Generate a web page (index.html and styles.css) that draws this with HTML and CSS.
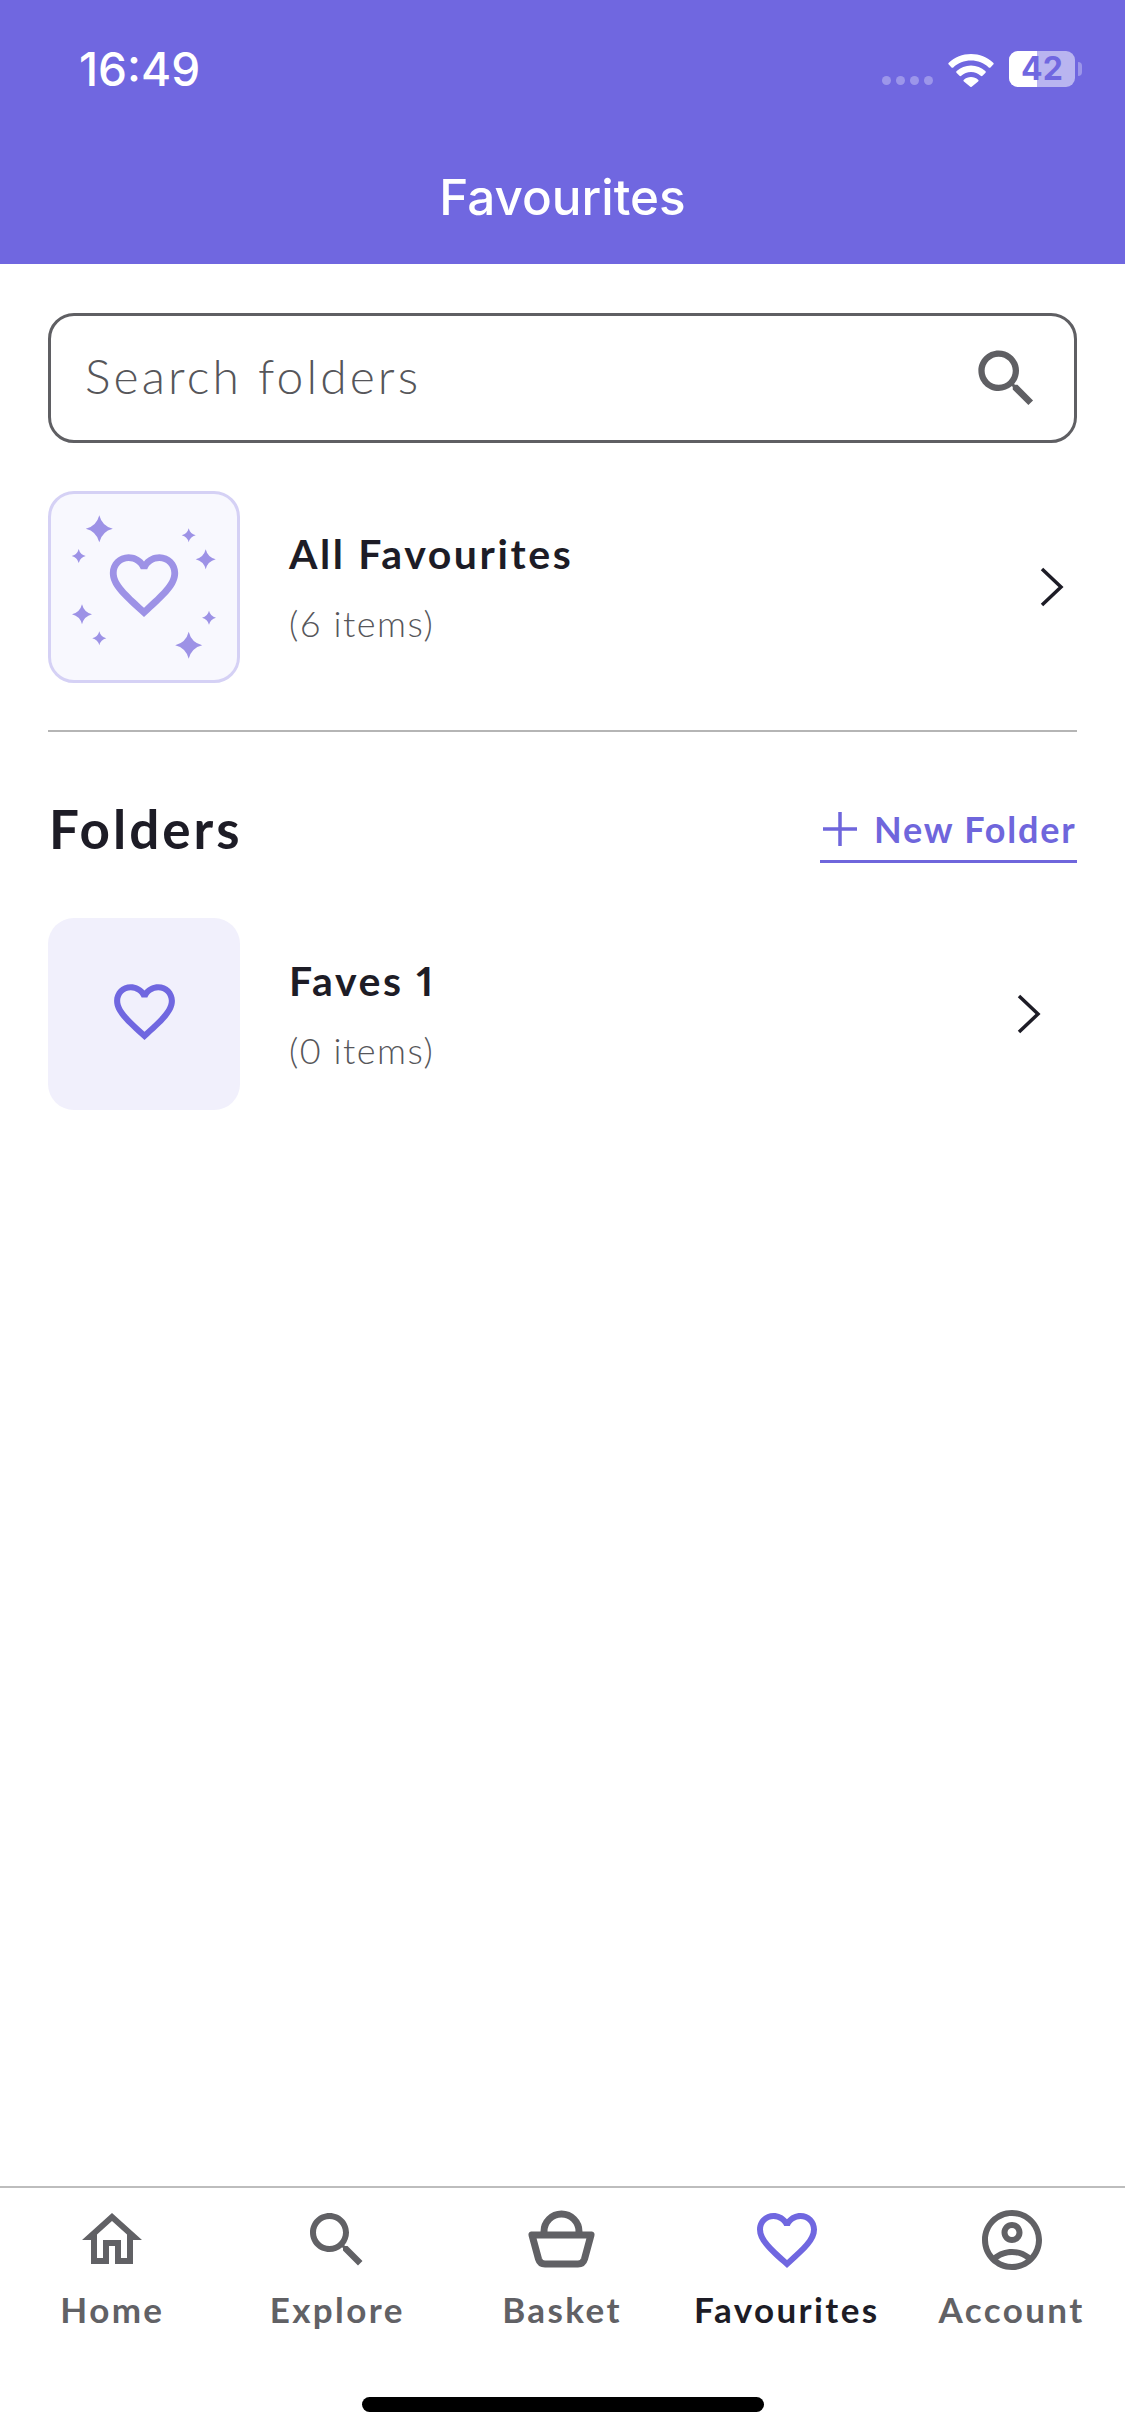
FILE: index.html
```html
<!DOCTYPE html>
<html lang="en">
<head>
<meta charset="utf-8">
<title>Favourites</title>
<link rel="stylesheet" href="styles.css">
</head>
<body>
<div class="app">
  <header class="header">
    <div class="status">
      <span class="time">16:49</span>
      <div class="status-right">
        <div class="dots"><i></i><i></i><i></i><i></i></div>
        <svg class="wifi" viewBox="0 0 46 33"><path d="M23 0C14.500 0 6.700 3.300.8 8.700a1.300 1.300 0 0 0 0 1.900l2.700 2.800a1.300 1.300 0 0 0 1.800 0C10 9.100 16.200 6.500 23 6.500s13 2.600 17.700 6.900a1.300 1.300 0 0 0 1.800 0l2.700-2.800a1.300 1.300 0 0 0 0-1.900C39.300 3.300 31.500 0 23 0zM23 11.500c-5.500 0-10.500 2.100-14.300 5.500a1.300 1.300 0 0 0 0 1.900l2.800 2.800a1.300 1.300 0 0 0 1.800 0c2.500-2.300 6-3.700 9.700-3.700s7.200 1.400 9.700 3.700a1.300 1.300 0 0 0 1.800 0l2.800-2.800a1.300 1.300 0 0 0 0-1.900C33.500 13.600 28.500 11.500 23 11.500zM23 23c-2.700 0-5.200 1-7.100 2.700a1.200 1.200 0 0 0 0 1.800l6.100 5.100a1.500 1.500 0 0 0 2 0l6.100-5.100a1.200 1.200 0 0 0 0-1.800C28.200 24 25.700 23 23 23z"/></svg>
        <div class="battery">
          <div class="battery-body"><div class="battery-fill"></div><span class="battery-num">42</span></div>
          <div class="battery-nub"></div>
        </div>
      </div>
    </div>
    <h1 class="title">Favourites</h1>
  </header>

  <main class="main">
    <div class="search">
      <span class="search-text">Search folders</span>
      <svg class="search-icon" viewBox="0 0 24 24"><path d="M15.500 14h-.79l-.28-.27C15.410 12.590 16 11.110 16 9.500 16 5.910 13.090 3 9.500 3S3 5.910 3 9.500 5.910 16 9.500 16c1.610 0 3.090-.59 4.230-1.570l.27.28v.79l5 4.990L20.490 19l-4.990-5zm-6 0C7.010 14 5 11.990 5 9.500S7.010 5 9.500 5 14 7.010 14 9.500 11.990 14 9.500 14z"/></svg>
    </div>

    <div class="row row-all">
      <div class="tile tile-all">
        <svg class="tile-art" viewBox="0 0 186 186">
          <defs><path id="spark" d="M0-1Q.2-.2 1 0 .2.200 0 1-.2.200-1 0-.2-.2 0-1Z"/></defs>
          <g class="sparks">
            <use href="#spark" transform="translate(48.300 34.700) scale(13.500)"/>
            <use href="#spark" transform="translate(137.700 41.300) scale(7)"/>
            <use href="#spark" transform="translate(27.700 62) scale(7)"/>
            <use href="#spark" transform="translate(154.700 65.300) scale(10)"/>
            <use href="#spark" transform="translate(31 120.300) scale(10)"/>
            <use href="#spark" transform="translate(158 123.700) scale(7)"/>
            <use href="#spark" transform="translate(48.300 144.300) scale(7)"/>
            <use href="#spark" transform="translate(137.700 151.300) scale(13.500)"/>
          </g>
          <path class="spark-heart" transform="translate(52 50) scale(3.417)" d="M16.500 3c-1.740 0-3.410.81-4.500 2.090C10.910 3.810 9.240 3 7.500 3 4.420 3 2 5.420 2 8.500c0 3.780 3.400 6.860 8.550 11.540L12 21.350l1.450-1.320C18.600 15.360 22 12.280 22 8.500 22 5.420 19.580 3 16.500 3zm-4.400 15.550l-.1.100-.1-.1C7.140 14.240 4 11.390 4 8.500 4 6.500 5.500 5 7.500 5c1.540 0 3.040.99 3.570 2.360h1.870C13.460 5.990 14.960 5 16.500 5c2 0 3.500 1.500 3.500 3.500 0 2.890-3.140 5.740-7.900 10.050z"/>
        </svg>
      </div>
      <div class="row-text">
        <div class="row-title">All Favourites</div>
        <div class="row-sub">(6 items)</div>
      </div>
      <svg class="chev chev-all" viewBox="0 0 24 40"><path d="M2 2l19 18L2 38"/></svg>
    </div>

    <div class="divider"></div>

    <div class="folders-head">
      <h2 class="folders-title">Folders</h2>
      <div class="new-folder">
        <svg class="plus" viewBox="0 0 34 34"><path d="M17 0v34M0 17h34"/></svg>
        <span>New Folder</span>
      </div>
    </div>

    <div class="row row-folder">
      <div class="tile tile-folder">
        <svg class="heart-icon" viewBox="0 0 24 24"><path d="M16.500 3c-1.740 0-3.410.81-4.500 2.090C10.910 3.810 9.240 3 7.500 3 4.420 3 2 5.420 2 8.500c0 3.780 3.400 6.860 8.550 11.540L12 21.350l1.450-1.320C18.600 15.360 22 12.280 22 8.500 22 5.420 19.580 3 16.500 3zm-4.400 15.550l-.1.100-.1-.1C7.140 14.240 4 11.390 4 8.500 4 6.500 5.500 5 7.500 5c1.540 0 3.040.99 3.570 2.360h1.870C13.460 5.990 14.960 5 16.500 5c2 0 3.500 1.500 3.500 3.500 0 2.890-3.140 5.740-7.900 10.050z"/></svg>
      </div>
      <div class="row-text">
        <div class="row-title row-title-num">Faves 1</div>
        <div class="row-sub">(0 items)</div>
      </div>
      <svg class="chev chev-folder" viewBox="0 0 24 40"><path d="M2 2l19 18L2 38"/></svg>
    </div>
  </main>

  <nav class="tabbar">
    <div class="tabs">
      <div class="tab">
        <svg class="tab-icon" viewBox="0 0 24 24"><path d="M12 5.690l5 4.500V18h-2v-6H9v6H7v-7.810l5-4.500M12 3L2 12h3v8h6v-6h2v6h6v-8h3L12 3z"/></svg>
        <span class="tab-label">Home</span>
      </div>
      <div class="tab">
        <svg class="tab-icon" viewBox="0 0 24 24"><path d="M15.500 14h-.79l-.28-.27C15.410 12.590 16 11.110 16 9.500 16 5.910 13.090 3 9.500 3S3 5.910 3 9.500 5.910 16 9.500 16c1.610 0 3.090-.59 4.230-1.570l.27.28v.79l5 4.990L20.490 19l-4.990-5zm-6 0C7.010 14 5 11.990 5 9.500S7.010 5 9.500 5 14 7.010 14 9.500 11.990 14 9.500 14z"/></svg>
        <span class="tab-label">Explore</span>
      </div>
      <div class="tab">
        <svg class="tab-icon basket" viewBox="0 0 72 72"><path d="M6 31H65M18 31V27.500A17.500 17.500 0 0 1 53 27.500V31M6 31L12.500 55Q14 60 19 60H52Q57 60 58.500 55L65 31"/></svg>
        <span class="tab-label">Basket</span>
      </div>
      <div class="tab tab-active">
        <svg class="tab-icon" viewBox="0 0 24 24"><path d="M16.500 3c-1.740 0-3.410.81-4.500 2.090C10.910 3.810 9.240 3 7.500 3 4.420 3 2 5.420 2 8.500c0 3.780 3.400 6.860 8.550 11.540L12 21.350l1.450-1.320C18.600 15.360 22 12.280 22 8.500 22 5.420 19.580 3 16.500 3zm-4.400 15.550l-.1.100-.1-.1C7.140 14.240 4 11.390 4 8.500 4 6.500 5.500 5 7.500 5c1.540 0 3.040.99 3.570 2.360h1.870C13.460 5.990 14.960 5 16.500 5c2 0 3.500 1.500 3.500 3.500 0 2.890-3.140 5.740-7.900 10.050z"/></svg>
        <span class="tab-label">Favourites</span>
      </div>
      <div class="tab">
        <svg class="tab-icon" viewBox="0 0 24 24"><path d="M12 2C6.480 2 2 6.480 2 12s4.480 10 10 10 10-4.480 10-10S17.520 2 12 2zM7.350 18.500C8.660 17.560 10.260 17 12 17s3.340.56 4.650 1.500C15.340 19.440 13.740 20 12 20s-3.340-.56-4.650-1.500zm10.790-1.380C16.450 15.800 14.320 15 12 15s-4.450.8-6.140 2.120C4.700 15.730 4 13.950 4 12c0-4.420 3.580-8 8-8s8 3.580 8 8c0 1.950-.7 3.730-1.860 5.120z"/><path d="M12 6c-1.930 0-3.500 1.570-3.500 3.500S10.070 13 12 13s3.500-1.570 3.500-3.500S13.930 6 12 6zm0 5c-.83 0-1.500-.67-1.500-1.500S11.170 8 12 8s1.500.67 1.500 1.500S12.830 11 12 11z"/></svg>
        <span class="tab-label">Account</span>
      </div>
    </div>
    <div class="home-bar"></div>
  </nav>
</div>
</body>
</html>
```

FILE: styles.css
```css
* { box-sizing: border-box; }
html, body { margin: 0; padding: 0; background: #fff; }
body { font-family: "Lato", "Open Sans", sans-serif; color: #1d1c26; }
.app { width: 1125px; height: 2436px; display: flex; flex-direction: column; overflow: hidden; }

.header { background: #7067e0; height: 264px; color: #fff; padding-top: 44px; display: flex; flex-direction: column; }
.status { height: 50px; display: flex; justify-content: space-between; align-items: center; padding: 0 43px 0 79px; }
.time { font-family: "Inter", sans-serif; font-weight: 500; font-size: 46px; line-height: 50px; }
.status-right { display: flex; align-items: center; }
.dots { display: flex; gap: 5px; margin-top: 22px; margin-right: 15px; }
.dots i { width: 9px; height: 9px; border-radius: 50%; background: #9c96ea; display: block; }
.wifi { width: 46px; height: 33px; fill: #fff; margin-right: 15px; margin-top: 2px; }
.battery { display: flex; align-items: center; }
.battery-body { width: 66px; height: 36px; border-radius: 9px; background: #b9b5f0; display: grid; place-items: center; }
.battery-fill { grid-area: 1 / 1; justify-self: start; width: 28px; height: 36px; border-radius: 9px 0 0 9px; background: #fff; }
.battery-num { grid-area: 1 / 1; font-family: "Inter", sans-serif; font-weight: 700; font-size: 32px; line-height: 36px; color: #7067e0; }
.battery-nub { width: 4px; height: 14px; margin-left: 3px; border-radius: 0 4px 4px 0; background: #9c96ea; }
.title { margin: 73px 0 0; font-family: "Inter", sans-serif; font-weight: 500; font-size: 49.400px; line-height: 60px; text-align: center; }

.main { flex: 1; padding: 49px 48px 0; display: flex; flex-direction: column; }
.search { height: 130px; border: 3px solid #5f5f63; border-radius: 26px; display: flex; align-items: center; justify-content: space-between; padding: 0 30px 0 34px; }
.search-text { font-weight: 300; font-size: 48px; letter-spacing: 3.100px; color: #56565a; margin-bottom: 5px; }
.search-icon { width: 75px; height: 75px; fill: #5f5f63; }

.row { display: flex; align-items: center; }
.row-all { margin-top: 48px; }
.row-folder { margin-top: 55px; }
.tile { width: 192px; height: 192px; border-radius: 26px; flex: none; display: flex; align-items: center; justify-content: center; }
.tile-all { background: #f8f8fe; border: 3px solid #d5d1f5; }
.tile-art { width: 186px; height: 186px; display: block; }
.sparks { fill: #9d92e6; }
.spark-heart { fill: #9d92e6; }
.tile-folder { background: #f1f0fc; }
.heart-icon { width: 73px; height: 73px; fill: #7067e0; margin-bottom: 5px; }
.row-text { flex: 1; margin-left: 49px; padding-top: 3px; }
.row-title { font-weight: 700; font-size: 41px; line-height: 46px; letter-spacing: 2.600px; color: #1d1c26; }
.row-title-num { font-variant-numeric: proportional-nums; }
.row-sub { font-weight: 300; font-size: 36px; line-height: 46px; margin-top: 23px; letter-spacing: 1.500px; color: #56565a; }
.chev { width: 24px; height: 40px; fill: none; stroke: #1d1c26; stroke-width: 3.500; flex: none; }
.chev-all { margin-right: 13px; }
.chev-folder { margin-right: 36px; }

.divider { height: 2px; margin-top: 47px; background: #b5b5b5; }
.folders-head { display: flex; justify-content: space-between; align-items: flex-end; margin-top: 61px; height: 70px; }
.folders-title { margin: 0 0 0 1px; padding-top: 2px; font-weight: 700; font-size: 53px; line-height: 68px; letter-spacing: 3px; color: #1d1c26; }
.new-folder { width: 257px; height: 70px; border-bottom: 3px solid #6f66dc; display: flex; align-items: center; gap: 17px; padding: 5px 0 0 3px; color: #6f66dc; font-weight: 700; font-size: 36px; letter-spacing: 1.800px; white-space: nowrap; }
.plus { width: 34px; height: 34px; fill: none; stroke: #6f66dc; stroke-width: 3.500; flex: none; }

.tabbar { height: 250px; border-top: 2px solid #bdbdbd; display: flex; flex-direction: column; align-items: center; padding-top: 16px; }
.tabs { width: 100%; padding-right: 1px; display: grid; grid-template-columns: repeat(5, 1fr); }
.tab { display: flex; flex-direction: column; align-items: center; color: #616165; }
.tab-icon { width: 72px; height: 72px; fill: currentColor; display: block; }
.basket { fill: none; stroke: currentColor; stroke-width: 7; stroke-linecap: round; stroke-linejoin: round; }
.tab-label { margin-top: 11px; font-weight: 700; font-size: 35px; line-height: 44px; letter-spacing: 2.400px; }
.tab-active { color: #1d1c26; }
.tab-active .tab-icon { fill: #7067e0; }
.home-bar { width: 402px; height: 15px; border-radius: 8px; background: #000; margin-top: 66px; }
```
